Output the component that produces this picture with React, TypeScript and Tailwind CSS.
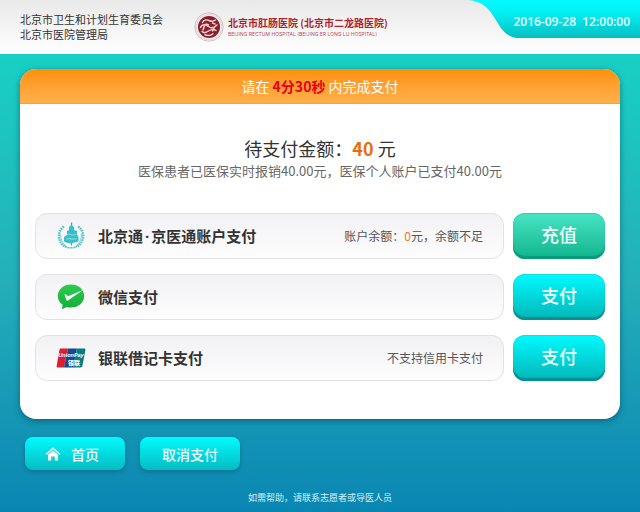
import React from 'react';

const HospitalSeal: React.FC = () => (
  <svg viewBox="0 0 30 30" className="w-[30px] h-[30px] shrink-0" fill="none" aria-hidden="true">
    <circle cx="15" cy="15" r="14.200" fill="#f3eded" stroke="#b9a3a6" strokeWidth="0.6" />
    <circle cx="15" cy="15" r="12.600" stroke="#d6c6c8" strokeWidth="1" strokeDasharray="1 0.8" />
    <circle cx="15" cy="15" r="11" fill="#8a1d2e" />
    <g stroke="#edd3d4" strokeWidth="1.500" strokeLinecap="round">
      <path d="M8.500 10.500c1.500-3 4.500-3 6.500-2s4 1.500 6.500-.5" />
      <path d="M6.500 15.500c2-4 5.500-3 8-1s5.500 1.500 8.500-1.500" />
      <path d="M8 19.500c2 2 4.500 1 6.500-.5s4.500-2.500 7.500-.5" />
      <path d="M11 22.800c2.500 1 6 .8 8-1M12 12l2.500 1M18.500 11l2.500 1" />
      <path d="M10.500 14l-1.500 4M20 16l-1.500 3" />
    </g>
  </svg>
);

const HealthEmblem: React.FC = () => (
  <svg viewBox="0 0 28 28" className="w-7 h-7" fill="none" aria-hidden="true">
    <path d="M7 4.500C0 9 0 20 8 24.500M21 4.500c7 4.500 7 15.500-1 20" stroke="#62c8cc" strokeWidth="2.400" strokeDasharray="1.800 0.6" />
    <path d="M3.500 12c0 5 2 9.500 6 12.500M24.500 12c0 5-2 9.500-6 12.500" stroke="#62c8cc" strokeWidth="0.8" />
    <path d="M8 24.500c3 1.800 9 1.800 12 0" stroke="#4bbfc4" strokeWidth="1.500" strokeDasharray="2 0.8" />
    <path d="M14.500 0.500v23" stroke="#2bb3bc" strokeWidth="1.300" />
    <path d="M12 5l2.500-2 2.500 2v3l3 1v4l1.500 1.500V19c-3.500 2.500-11 3-14.500.5v-4.500l3-2V9l2-1z" fill="#38bfc9" />
    <path d="M10 12.500c3-1 6 2 9-.5M9.500 17c3-1.500 6 1.500 10-.5" stroke="#a9e6ea" strokeWidth="0.8" />
  </svg>
);

const WeChatPayIcon: React.FC = () => (
  <svg viewBox="0 0 28 26" className="w-7 h-[26px]" aria-hidden="true">
    <defs>
      <linearGradient id="wechat" x1="0" y1="0" x2="0" y2="1">
        <stop offset="0" stopColor="#2ccc50" />
        <stop offset="1" stopColor="#12ad3a" />
      </linearGradient>
    </defs>
    <path d="M14 .5C6.600.5.8 5.300.8 12c0 3.600 1.800 6.700 4.800 8.700L5 25.200l4.600-2.300c1.400.4 2.900.6 4.400.6 7.500 0 13.200-4.900 13.200-11.500S21.500.5 14 .5z" fill="url(#wechat)" />
    <path d="M7.500 10.500c.8-.5 1.500 0 3.500 1.700L26 6 11.300 16.300c-.8.600-1.600.4-2-.5z" fill="#fff" />
  </svg>
);

const UnionPayIcon: React.FC = () => (
  <svg viewBox="0 0 30 20" className="w-[30px] h-5" aria-hidden="true">
    <path d="M4.500.5H12L8 19.500H2C.8 19.500.4 18.800.7 17.700L3.500 1.800C3.700 1 4 .5 4.500.5z" fill="#d81f33" />
    <path d="M12 .5h9l-4 19H8z" fill="#15498c" />
    <path d="M21 .5h7.200c1 0 1.400.7 1.200 1.600l-3 16c-.2.900-.9 1.400-1.800 1.400H17z" fill="#087b80" />
    <text x="15" y="9" textAnchor="middle" fill="#fff" fontSize="5.500" fontWeight="700" fontStyle="italic" fontFamily="Liberation Sans, sans-serif">UnionPay</text>
    <text x="18" y="17" textAnchor="middle" fill="#fff" fontSize="6" fontWeight="900" fontFamily="Noto Sans CJK SC, sans-serif">银联</text>
  </svg>
);

const HomeIcon: React.FC = () => (
  <svg viewBox="0 0 16 14" className="w-4 h-3.5" fill="none" aria-hidden="true">
    <path d="M1 7.500L8 1.200l7 6.300" stroke="#fff" strokeWidth="1.500" />
    <path d="M3 7.800l5-4.400 5 4.400v5.700H9.800V9.500H6.200v4H3z" fill="#fff" />
  </svg>
);

interface Method {
  id: string;
  name: React.ReactNode;
  icon: React.ReactNode;
  note?: React.ReactNode;
  action: string;
  recharge?: boolean;
}

const methods: Method[] = [
  {
    id: 'account',
    name: <>北京通<span className="mx-0.5 font-['Open_Sans',sans-serif]">·</span>京医通账户支付</>,
    icon: <HealthEmblem />,
    note: <>账户余额：<span className="text-[#f07a1c]">0</span>元，余额不足</>,
    action: '充值',
    recharge: true,
  },
  { id: 'wechat', name: '微信支付', icon: <WeChatPayIcon />, action: '支付' },
  { id: 'unionpay', name: '银联借记卡支付', icon: <UnionPayIcon />, note: '不支持信用卡支付', action: '支付' },
];

const Header: React.FC = () => (
  <header className="flex items-start justify-between h-[54px] bg-linear-to-b from-[#e9e9e9] to-white">
    <div className="flex items-center h-[54px] pl-5">
      <div className="w-[174px] text-[11px] leading-[15px] text-[#333]">
        <p>北京市卫生和计划生育委员会</p>
        <p>北京市医院管理局</p>
      </div>
      <HospitalSeal />
      <div className="pl-1 whitespace-nowrap">
        <h1 className="text-[10px] leading-[14px] font-bold text-[#b3202c]">北京市肛肠医院 (北京市二龙路医院)</h1>
        <p className="font-['Inter',sans-serif] text-[5px] leading-[8px] text-[#b8505c]">
          BEIJING RECTUM HOSPITAL (BEIJING ER LONG LU HOSPITAL)
        </p>
      </div>
    </div>
    <div className="relative flex items-end justify-end w-[172px] h-[38px] pr-2.5 pb-2">
      <svg className="absolute inset-0 w-full h-full" viewBox="0 0 172 38" aria-hidden="true">
        <defs>
          <linearGradient id="tab" x1="0" y1="0" x2="0" y2="1">
            <stop offset="0" stopColor="#02fbff" />
            <stop offset="0.35" stopColor="#04eef1" />
            <stop offset="1" stopColor="#05bfc2" />
          </linearGradient>
        </defs>
        <path d="M0 0C13 1 20 7 26 17C33 28 37 38 52 38H172V0z" fill="url(#tab)" />
      </svg>
      <time className="relative font-['Open_Sans',sans-serif] text-xs font-semibold text-[#e6ffff] whitespace-pre" dateTime="2016-09-28T12:00:00">
        {'2016-09-28  12:00:00'}
      </time>
    </div>
  </header>
);

const MethodRow: React.FC<{ method: Method }> = ({ method }) => (
  <li className="flex gap-[9px]">
    <div className="flex flex-1 items-center h-[46px] px-5 rounded-xl border border-[#e2e1e4] bg-linear-to-b from-[#f2f1f3] to-[#fefdfe]">
      <span className="flex justify-center w-[30px]">{method.icon}</span>
      <span id={`method-${method.id}`} className="ml-3 text-[15px] leading-5 font-bold text-[#333]">{method.name}</span>
      {method.note && <span className="ml-auto text-xs text-[#555]">{method.note}</span>}
    </div>
    <button
      type="button"
      aria-describedby={`method-${method.id}`}
      className={
        'w-[92px] h-[46px] pb-1 rounded-xl text-lg font-medium text-[#efffff] ' +
        (method.recharge
          ? 'bg-linear-to-b from-[#46e5c4] to-[#08b48c] shadow-[inset_0_-3px_1px_#0b9b78,inset_0_1px_0_#2fcfae]'
          : 'bg-linear-to-b from-[#00fbff] to-[#02b5b7] shadow-[inset_0_-3px_1px_#078f92,inset_0_1px_0_#12dfe2]')
      }
    >
      {method.action}
    </button>
  </li>
);

const NAV_BUTTON =
  'flex items-center gap-2.5 w-[100px] h-[33px] rounded-lg text-sm font-medium text-[#efffff] bg-linear-to-b from-[#00fbff] to-[#05bcc2] shadow-[0_2px_4px_rgba(0,60,90,0.35)]';

const App: React.FC = () => {
  return (
    <div className="flex flex-col min-h-screen bg-linear-to-b from-[#12d8c6] via-[#24afb9] via-55% to-[#0a86b2] font-['Noto_Sans_CJK_SC',sans-serif]">
      <Header />

      <main className="px-5 pt-[15px]">
        <section className="rounded-2xl overflow-hidden bg-white shadow-[0_2px_6px_rgba(0,50,70,0.5)]">
          <div className="flex items-center justify-center h-[35px] bg-linear-to-b from-[#ff9000] to-[#ffb04a] border-b border-[#e8a45c] text-sm text-white whitespace-pre">
            请在 <strong className="font-bold text-[#e60012]">4分30秒</strong> 内完成支付
          </div>

          <div className="px-[15px] pt-8 pb-[38px]">
            <h2 className="text-center text-lg leading-6 text-[#333]">
              待支付金额：<strong className="font-bold text-[#ea6d0c]">40</strong> 元
            </h2>
            <p className="text-center text-[13px] leading-[22px] text-[#666]">
              医保患者已医保实时报销40.00元，医保个人账户已支付40.00元
            </p>

            <ul className="flex flex-col gap-[15px] mt-[31px]">
              {methods.map((method) => (
                <MethodRow key={method.id} method={method} />
              ))}
            </ul>
          </div>
        </section>

        <nav className="flex gap-[15px] px-[5px] mt-[18px]">
          <button type="button" className={`${NAV_BUTTON} pl-5`}>
            <HomeIcon />
            首页
          </button>
          <button type="button" className={`${NAV_BUTTON} justify-center`}>取消支付</button>
        </nav>
      </main>

      <footer className="pt-5 pb-1 text-center text-[9px] leading-4 text-[#d5f0f8]">
        如需帮助，请联系志愿者或导医人员
      </footer>
    </div>
  );
};

export default App;
